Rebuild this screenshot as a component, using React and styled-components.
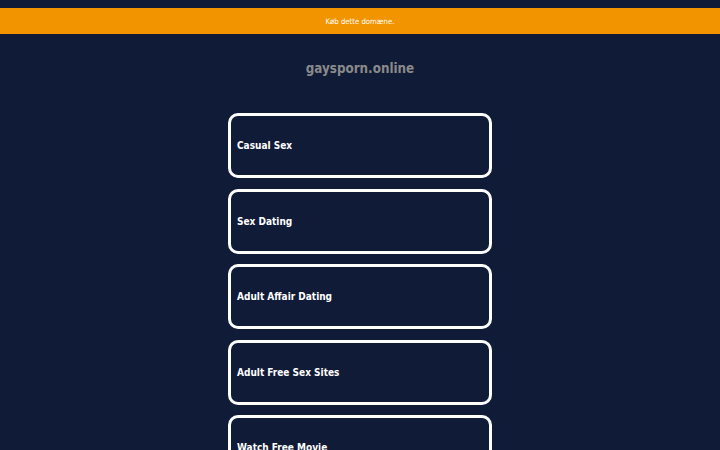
import styled, { createGlobalStyle } from 'styled-components';

const links = [
  'Casual Sex',
  'Sex Dating',
  'Adult Affair Dating',
  'Adult Free Sex Sites',
  'Watch Free Movie',
];

const GlobalStyle = createGlobalStyle`
  html, body {
    margin: 0;
    padding: 0;
    background: #101b37;
    font-family: "DejaVu Sans Condensed", "DejaVu Sans", sans-serif;
    overflow: hidden;
  }
`;

const Page = styled.div`
  height: 450px;
  padding-top: 8px;
  box-sizing: border-box;
  overflow: hidden;
`;

const Banner = styled.div`
  background: #f29400;
  color: #fff;
  height: 26px;
  display: flex;
  align-items: center;
  justify-content: center;
  font-size: 7.7px;
`;

const Title = styled.h1`
  margin: 0;
  padding-top: 26px;
  text-align: center;
  color: #8a8a8a;
  font-size: 13.3px;
  font-weight: bold;
  line-height: 17px;
`;

const List = styled.div`
  width: 264px;
  margin: 36px auto 0;
  display: flex;
  flex-direction: column;
  gap: 10.5px;
`;

const Card = styled.a`
  box-sizing: border-box;
  height: 65px;
  border: 3px solid #fff;
  border-radius: 10px;
  display: flex;
  align-items: center;
  padding-left: 6px;
  color: #fff;
  font-size: 10px;
  font-weight: bold;
  text-decoration: none;
`;

export default function App() {
  return (
    <Page>
      <GlobalStyle />
      <Banner>Køb dette domæne.</Banner>
      <Title>gaysporn.online</Title>
      <List>
        {links.map(l => (
          <Card key={l} href="#">
            {l}
          </Card>
        ))}
      </List>
    </Page>
  );
}
